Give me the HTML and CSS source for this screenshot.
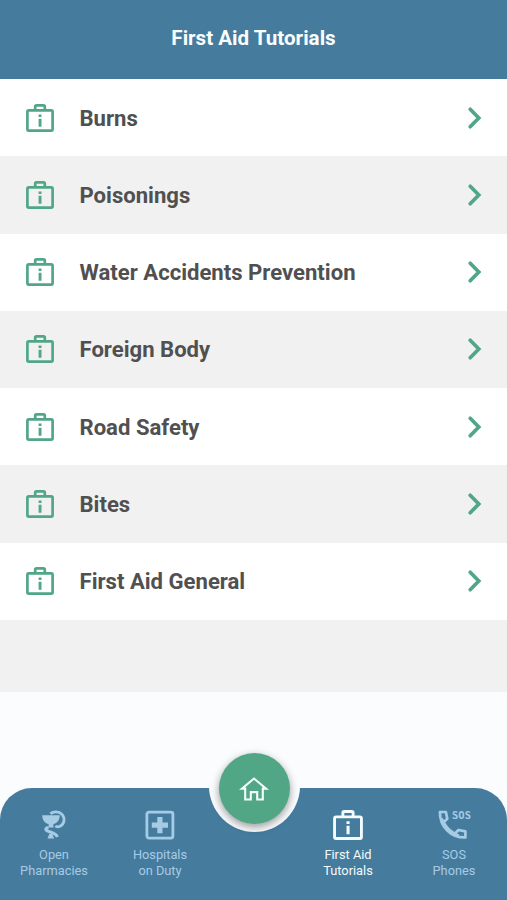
FILE: index.html
```
<!DOCTYPE html>
<html lang="en">
<head>
    <meta charset="utf-8">
    <title>First Aid Tutorials</title>
    <meta name="viewport" content="width=device-width, initial-scale=1">
    <link rel="stylesheet" href="styles.css">
</head>
<body>
    <!-- shared icons -->
    <svg class="sprite">
        <symbol id="kit" viewBox="0 0 30 30">
            <path d="M10.2 7.2V3.6q0-1.3 1.3-1.3h7q1.3 0 1.3 1.3v3.6" fill="none" stroke="currentColor" stroke-width="2.7"/>
            <rect x="2.4" y="7.4" width="25.2" height="20.2" rx="1.4" fill="none" stroke="currentColor" stroke-width="2.7"/>
            <path d="M13.6 11.6h2.9v2.5h-2.9zM13.6 15.7h2.9v8h-2.9z" fill="currentColor"/>
        </symbol>
        <symbol id="arrow" viewBox="0 0 16 24">
            <path d="M3.2 3.2l8.6 8.8-8.6 8.8" fill="none" stroke="currentColor" stroke-width="3.7" stroke-linecap="round" stroke-linejoin="miter"/>
        </symbol>
    </svg>

    <header class="header">
        <h1>First Aid Tutorials</h1>
    </header>

    <main class="content">
        <ul class="list">
            <li class="item"><svg class="kit"><use href="#kit"/></svg><span class="label">Burns</span><svg class="arrow"><use href="#arrow"/></svg></li>
            <li class="item"><svg class="kit"><use href="#kit"/></svg><span class="label">Poisonings</span><svg class="arrow"><use href="#arrow"/></svg></li>
            <li class="item"><svg class="kit"><use href="#kit"/></svg><span class="label">Water Accidents Prevention</span><svg class="arrow"><use href="#arrow"/></svg></li>
            <li class="item"><svg class="kit"><use href="#kit"/></svg><span class="label">Foreign Body</span><svg class="arrow"><use href="#arrow"/></svg></li>
            <li class="item"><svg class="kit"><use href="#kit"/></svg><span class="label">Road Safety</span><svg class="arrow"><use href="#arrow"/></svg></li>
            <li class="item"><svg class="kit"><use href="#kit"/></svg><span class="label">Bites</span><svg class="arrow"><use href="#arrow"/></svg></li>
            <li class="item"><svg class="kit"><use href="#kit"/></svg><span class="label">First Aid General</span><svg class="arrow"><use href="#arrow"/></svg></li>
        </ul>
        <div class="filler"></div>
    </main>

    <nav class="tabs">
        <a class="tab">
            <svg class="tab-icon" viewBox="0 0 32 32" fill="none">
                <path d="M4.2 6.2h17.6c-.2 4.6-2.6 8.2-6.4 8.8v3.4h-4.8V15C6.8 14.4 4.4 10.8 4.2 6.2z" fill="currentColor"/>
                <path d="M12.4 4.8c3-2.8 8.6-2.6 11.6.6 3.4 3.9 2.5 9.7-2 11.8-1.5.7-3.4.8-4.7-.2" stroke="currentColor" stroke-width="2.8"/>
                <path d="M10.6 18.4c-2.8.2-3.5 1.7-2.2 3 1.6 1.6 9.4 1.8 11 6.6" stroke="currentColor" stroke-width="3"/>
                <path d="M11.3 25h3l1.8 4.6H9.5z" fill="currentColor"/>
            </svg>
            <span>Open<br>Pharmacies</span>
        </a>
        <a class="tab">
            <svg class="tab-icon" viewBox="0 0 32 32" fill="none" stroke="currentColor">
                <rect x="2.9" y="3.1" width="26" height="26" rx="2" stroke-width="2.8"/>
                <path d="M15.9 8v16.2M7.8 16.1H24" stroke-width="5.2"/>
            </svg>
            <span>Hospitals<br>on Duty</span>
        </a>
        <a class="tab home-gap"></a>
        <a class="tab active">
            <svg class="tab-icon"><use href="#kit"/></svg>
            <span>First Aid<br>Tutorials</span>
        </a>
        <a class="tab">
            <svg class="tab-icon sos" viewBox="0 0 40 32">
                <path d="M5.9 3h6l1.4 6.7-3.7 3.5c2.8 5.5 6 8.9 11.3 11.5l3.5-3.7 7 1.4v6C16.5 28.6 5.7 17.4 5.9 3zM9.6 13.2L7.3 9.4M20.9 24.7l4 2.2" fill="none" stroke="currentColor" stroke-width="2.7" stroke-linejoin="round"/>
                <text x="18" y="9.6" fill="currentColor">SOS</text>
            </svg>
            <span>SOS<br>Phones</span>
        </a>
        <div class="home-ring">
            <div class="home">
                <svg class="home-icon" viewBox="0 0 30 26" fill="none" stroke="currentColor" stroke-width="2.1">
                    <path d="M6.2 12.6v10.9h5.6v-7.4h6.4v7.4h5.6V12.6h3.3L15 2.5 2.9 12.6z"/>
                </svg>
            </div>
        </div>
    </nav>
</body>
</html>
```

FILE: styles.css
```
* {
    box-sizing: border-box;
}
body {
    margin: 0;
    height: 900px;
    display: flex;
    flex-direction: column;
    overflow: hidden;
    background-color: #fafcfe;
    font-family: Roboto, sans-serif;
}
.sprite {
    display: none;
}
.header {
    height: 79px;
    padding-top: 26px;
    background-color: #457b9d;
    color: #fafeff;
    text-align: center;
}
.header h1 {
    margin: 0;
    font-size: 20.6px;
    line-height: 24px;
    font-weight: 700;
}
.content {
    flex: 1;
}
.list {
    height: 541px;
    margin: 0;
    padding: 0;
    list-style: none;
    display: grid;
    grid-template-rows: repeat(7, 1fr);
}
.item {
    display: flex;
    align-items: center;
    padding: 0 24px 0 25px;
    background-color: #fff;
    color: #505050;
}
.item:nth-child(even) {
    background-color: #f1f1f1;
}
.kit {
    width: 30px;
    height: 30px;
    color: #52a688;
}
.label {
    flex: 1;
    margin-left: 24.5px;
    font-size: 22.1px;
    line-height: 26px;
    font-weight: 700;
}
.arrow {
    width: 16px;
    height: 24px;
    color: #52a688;
}
.filler {
    height: 72px;
    background-color: #f1f1f1;
}
.tabs {
    position: relative;
    height: 112px;
    display: grid;
    grid-template-columns: 108px 104px 1fr 106px 106px;
    padding-top: 21px;
    background-color: #457b9d;
    border-radius: 32px 32px 0 0;
}
.tab {
    display: flex;
    flex-direction: column;
    align-items: center;
    color: #a6cbe5;
    font-size: 12.8px;
    line-height: 15.5px;
    text-align: center;
}
.tab.active {
    color: #f4fbff;
}
.tab-icon {
    width: 32px;
    height: 32px;
    margin-bottom: 6px;
}
.sos {
    width: 40px;
}
.sos text {
    font-family: "DejaVu Sans Mono", monospace;
    font-size: 10.5px;
    font-weight: 700;
}
/* home button sits over the top edge of the bar */
.home-ring {
    position: absolute;
    top: -48px;
    left: 50%;
    width: 91px;
    height: 92px;
    margin-left: -45px;
    padding: 13px 10px;
    border-radius: 50%;
    background-color: #fafcfe;
}
.home {
    width: 71px;
    height: 71px;
    display: flex;
    align-items: center;
    justify-content: center;
    border-radius: 50%;
    background-color: #50a685;
    color: #f4fffb;
    box-shadow: 0 3px 8px rgba(0, 0, 0, 0.4);
}
.home-icon {
    width: 30px;
    height: 26px;
}
```
